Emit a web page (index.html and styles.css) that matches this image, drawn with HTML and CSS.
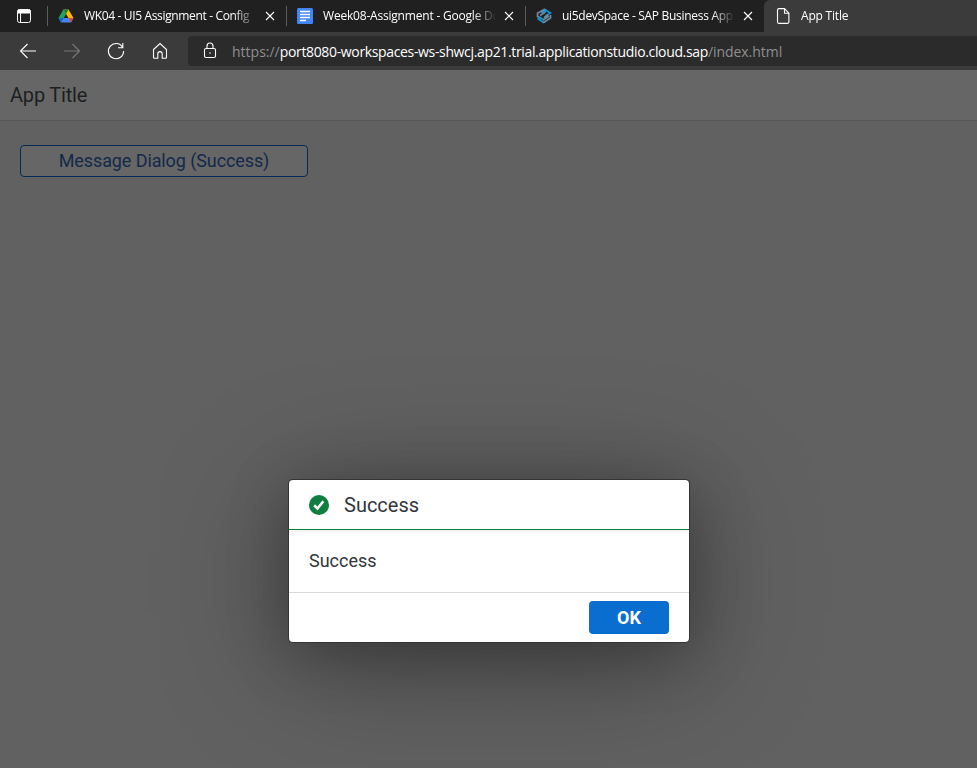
FILE: index.html
```
<!DOCTYPE html>
<html lang="en">
<head>
<meta charset="utf-8">
<title>App Title</title>
<link rel="stylesheet" href="styles.css">
</head>
<body>
<header class="browser">
  <div class="tabs">
    <div class="tab-actions">
      <svg width="16" height="16" viewBox="0 0 16 16" fill="none" stroke="#fff"><rect x="1.5" y="1.5" width="13" height="13" rx="2"/><path d="M2 2h12v3H2z" fill="#fff"/><path d="M4.5 5v9.500"/></svg>
    </div>
    <div class="tab">
      <svg width="16" height="16" viewBox="0 0 16 16"><path d="M5.300 1.500 8 6 3 14.500.5 10z" fill="#1ea362"/><path d="M5.300 1.500h5.200L15.500 10h-5z" fill="#ffba00"/><path d="M5.300 1.500h5.200L8 6z" fill="#188038"/><path d="M5.500 10h10L13 14.500H3z" fill="#4285f4"/><path d="M10.500 10h5L13 14.500z" fill="#ea4335"/><path d="M.5 10h5L3 14.500z" fill="#1967d2"/></svg>
      <span class="tab-text t1">WK04 - UI5 Assignment - Config</span>
      <svg class="close" width="10" height="10" viewBox="0 0 10 10"><path d="m1 1 8 8M9 1 1 9"/></svg>
    </div>
    <div class="tab">
      <svg width="16" height="16" viewBox="0 0 16 16"><rect width="16" height="16" rx="1.500" fill="#4285f4"/><path d="M3 3.500h10M3 6.500h10M3 9.500h10M3 12.500h6" stroke="#fff" stroke-width="1.400"/></svg>
      <span class="tab-text t2">Week08-Assignment - Google Docs</span>
      <svg class="close" width="10" height="10" viewBox="0 0 10 10"><path d="m1 1 8 8M9 1 1 9"/></svg>
    </div>
    <div class="tab">
      <svg width="16" height="16" viewBox="0 0 16 16" fill="none" stroke-width="1.700"><path d="M9 1 1.500 5.200v3.300L5 10.500M5.500 5l4-2.300M4 7.500 9.500 4" stroke="#71889b"/><path d="M8.500 1.200 14.500 5 9.500 8M11 2l-4.500 3" stroke="#1595d3"/><path d="M1.500 10.500 7.500 14.500 9 13.500M3 9l5 3" stroke="#1595d3"/><path d="m7.500 14.500 7-4.500V7M7 12l6-4M8 9.500 12 7" stroke="#71889b"/></svg>
      <span class="tab-text t3">ui5devSpace - SAP Business App</span>
      <svg class="close" width="10" height="10" viewBox="0 0 10 10"><path d="m1 1 8 8M9 1 1 9"/></svg>
    </div>
    <div class="tab active">
      <svg width="14" height="16" viewBox="0 0 14 16" fill="none" stroke="#fff" stroke-width="1.100"><path d="M3 .6h5.500l4.400 4.500v8.800a1.500 1.500 0 0 1-1.500 1.500H3A1.500 1.500 0 0 1 1.500 14V2A1.500 1.500 0 0 1 3 .6ZM8.500.8v4.400h4.200"/></svg>
      <span class="tab-text t4">App Title</span>
    </div>
  </div>
  <div class="toolbar">
    <svg class="nav" width="20" height="20" viewBox="0 0 20 20"><path d="M18 10H2.500M9.500 3 2.500 10l7 7"/></svg>
    <svg class="nav off" width="20" height="20" viewBox="0 0 20 20"><path d="M2 10h15.500M10.500 3l7 7-7 7"/></svg>
    <svg class="nav" width="20" height="20" viewBox="0 0 20 20"><path d="M16.500 6.200A7.600 7.600 0 1 0 17.600 10M16.800 2v4.800H12"/></svg>
    <svg class="nav" width="20" height="20" viewBox="0 0 20 20"><path d="M3.500 8.500 10 2.600l6.500 5.900v7.800a1 1 0 0 1-1 1h-3.300v-4.500a2.200 2.200 0 0 0-4.400 0v4.500H4.500a1 1 0 0 1-1-1Z"/></svg>
    <div class="address">
      <svg class="nav lock" width="16" height="18" viewBox="0 0 16 18"><rect x="2.500" y="6.500" width="11" height="9" rx="1.500"/><path d="M5 6.500V4a3 3 0 0 1 6 0v2.500"/><circle cx="8" cy="11" r=".8" fill="#fff" stroke="none"/></svg>
      <span class="url"><span class="scheme">https://</span><span class="host">port8080-workspaces-ws-shwcj.ap21.trial.applicationstudio.cloud.sap</span><span class="path">/index.html</span></span>
    </div>
  </div>
</header>
<main class="page">
  <div class="app-bar"><h1>App Title</h1></div>
  <div class="content"><button class="launch"><span>Message Dialog (Success)</span></button></div>
  <section class="dialog">
    <div class="dialog-head">
      <svg width="20" height="20" viewBox="0 0 20 20"><circle cx="10" cy="10" r="10" fill="#107e3e"/><path d="m5.200 10.300 3.300 3.200 5.800-7.200" fill="none" stroke="#fff" stroke-width="2.600"/></svg>
      <h2>Success</h2>
    </div>
    <div class="dialog-body"><span>Success</span></div>
    <div class="dialog-foot"><button class="ok">OK</button></div>
  </section>
</main>
</body>
</html>
```
FILE: styles.css
```
* { box-sizing: border-box; }
body { margin: 0; width: 977px; height: 768px; overflow: hidden; font-family: "Open Sans", "Noto Sans", sans-serif; background: #616161; }
h1, h2 { margin: 0; font-weight: 400; }
svg { flex: none; display: block; }
.browser { height: 70px; background: #3b3b3b; }
.tabs { display: flex; height: 32px; background: #202020; }
.tab-actions { width: 47px; display: flex; align-items: center; padding-left: 16px; }
.tab { position: relative; width: 239px; display: flex; align-items: center; padding-left: 11px; color: #fff; font-size: 12px; }
.tab::before { content: ""; position: absolute; left: 0; top: 6px; width: 1px; height: 20px; background: #5c5c5c; }
.tab-text { width: 173px; margin-left: 10px; overflow: hidden; white-space: nowrap; line-height: 20px; -webkit-mask-image: linear-gradient(90deg, #000 150px, transparent 173px); }
.t1 { letter-spacing: -.35px; }
.t2 { letter-spacing: -.2px; }
.t3 { letter-spacing: -.3px; }
.t4 { letter-spacing: -.2px; }
.close { margin-left: 8px; fill: none; stroke: #fff; stroke-width: 1.1; }
.tab.active { flex: 1; background: #3b3b3b; padding-left: 12px; border-top-left-radius: 6px; margin-left: 0; }
.tab.active::before { display: none; }
.tab.active .tab-text { margin-left: 11px; }
.toolbar { display: flex; align-items: center; height: 38px; padding-left: 18px; gap: 24px; }
.nav { fill: none; stroke: #fff; stroke-width: 1.1; }
.off { stroke: #777; }
.address { flex: 1; height: 30px; margin-left: -6px; display: flex; align-items: center; background: #2b2b2b; border-radius: 4px 0 0 4px; padding-left: 14px; }
.url { margin-left: 14px; font-size: 14px; white-space: nowrap; color: #8f8f8f; }
.host { color: #fff; letter-spacing: -.35px; }
.path { letter-spacing: -.05px; }
.page { position: relative; height: 698px; background: #616161; font-family: Roboto, sans-serif; overflow: hidden; }
.app-bar { height: 51px; background: #666; border-bottom: 1px solid #575757; padding-left: 10px; display: flex; align-items: center; }
.app-bar h1 { color: #1d1f21; font-size: 20px; letter-spacing: -.2px; line-height: 24px; }
.content { padding: 24px 20px; }
.launch { width: 288px; height: 32px; border: 1px solid #042b54; border-radius: 4px; background: #666; color: #13294a; font: 18px/28px Roboto, sans-serif; padding: 0; letter-spacing: -.1px; }
.dialog { position: absolute; left: 289px; top: 410px; width: 400px; height: 162px; background: #fff; border-radius: 4px; box-shadow: 0 0 0 1px #353535, 0 10px 60px rgba(0, 0, 0, .25), 0 20px 130px rgba(0, 0, 0, .35); color: #32363a; }
.dialog-head { height: 50px; display: flex; align-items: center; padding-left: 20px; gap: 15px; border-bottom: 1px solid #107e3e; box-shadow: 0 2px 3px rgba(0, 0, 0, .06); }
.dialog-head h2 { font-size: 20px; }
.dialog-body { height: 62px; padding: 20px; font-size: 18px; line-height: 22px; }
.dialog-foot { height: 50px; border-top: 1px solid #d9d9d9; display: flex; justify-content: flex-end; padding: 8px 20px; }
.ok { width: 80px; height: 33px; border: 0; border-radius: 4px; background: #0a6ed1; color: #fff; font: bold 18px/32px Roboto, sans-serif; padding: 0; }
```
